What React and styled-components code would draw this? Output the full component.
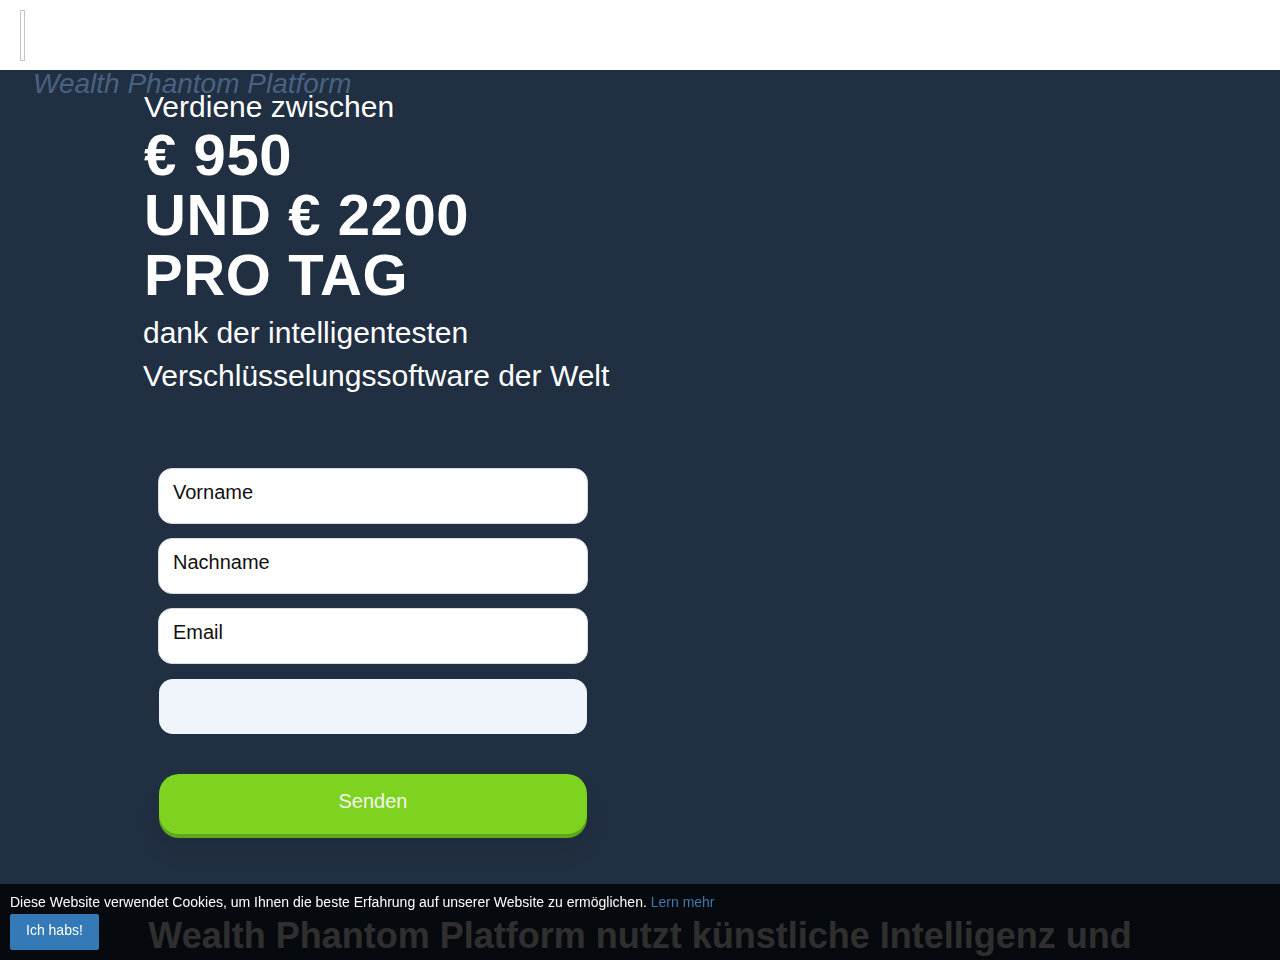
import styled, { createGlobalStyle } from 'styled-components';

const GlobalStyle = createGlobalStyle`
	html, body {
		margin: 0;
		padding: 0;
		background: #212f42;
		font-family: 'Liberation Sans', Arial, sans-serif;
	}
	* {
		box-sizing: border-box;
	}
`;

const Header = styled.header`
	height: 70px;
	background: #ffffff;
	padding: 10px 0 0 20px;
`;

const BrokenLogo = styled.span`
	display: block;
	width: 5px;
	height: 51px;
	border: 1px solid #c4c4c4;
`;

const Hero = styled.section`
	background: #212f42;
	padding-bottom: 40px;
`;

const Brand = styled.div`
	padding-left: 33px;
	font-size: 28px;
	line-height: 28px;
	font-style: italic;
	color: #4a6282;
	margin-bottom: -6px;
	white-space: nowrap;
`;

const Content = styled.div`
	padding-left: 144px;
	color: #ffffff;
`;

const Lead = styled.div`
	font-size: 30px;
	line-height: 30px;
`;

const Amount = styled.h1`
	margin: 3px 0 0;
	font-size: 58px;
	line-height: 60px;
	font-weight: 700;
	letter-spacing: 0.6px;
`;

const Sub = styled.p`
	margin: 6px 0 0 -1px;
	font-size: 30px;
	line-height: 43px;
`;

const Form = styled.form`
	width: 430px;
	margin: 71px 0 0 14px;
	display: flex;
	flex-direction: column;
	gap: 14px;
`;

const Input = styled.input`
	width: 430px;
	height: 56px;
	padding: 0 14px 7px;
	border: 1px solid #d6dce4;
	border-radius: 14px;
	background: #ffffff;
	font-family: inherit;
	font-size: 20px;
	color: #111;
	outline: none;

	&::placeholder {
		color: #111;
		opacity: 1;
	}
`;

const PhoneField = styled.div`
	width: 428px;
	height: 55px;
	margin: 1px 0 0 1px;
	border-radius: 14px;
	background: #f0f5fc;
`;

const Submit = styled.button`
	width: 428px;
	height: 60px;
	margin: 26px 0 0 1px;
	padding: 0 0 6px;
	border: none;
	border-radius: 20px;
	background: #7ed321;
	box-shadow: 0 4px 0 #5fa61b, 0 18px 24px rgba(0, 0, 0, 0.06);
	font-family: inherit;
	font-size: 20px;
	color: #f4f6f2;
	cursor: pointer;
`;

const Features = styled.section`
	background: #212f42;
	padding: 40px 0 60px;
`;

const FeatureTitle = styled.h2`
	max-width: 1000px;
	margin: 0 auto;
	text-align: center;
	font-size: 36px;
	line-height: 43px;
	font-weight: 700;
	color: #e8e8e8;
`;

const CookieBar = styled.div`
	position: fixed;
	left: 0;
	right: 0;
	bottom: 0;
	height: 76px;
	padding: 8px 10px 10px;
	background: rgba(0, 0, 0, 0.8);
	color: #ffffff;
	font-size: 14px;
	line-height: 20px;
`;

const CookieLink = styled.a`
	color: #4277aa;
	text-decoration: none;
`;

const CookieButton = styled.button`
	display: block;
	height: 36px;
	margin-top: 2px;
	padding: 0 16px 4px;
	border: none;
	border-radius: 2px;
	background: #337ab7;
	color: #ffffff;
	font-family: inherit;
	font-size: 14px;
`;

export default function App() {
	return (
		<>
			<GlobalStyle />
			<Header>
				<BrokenLogo />
			</Header>
			<Hero>
				<Brand>Wealth Phantom Platform</Brand>
				<Content>
					<Lead>Verdiene zwischen</Lead>
					<Amount>
						€ 950
						<br />
						UND € 2200
						<br />
						PRO TAG
					</Amount>
					<Sub>
						dank der intelligentesten
						<br />
						Verschlüsselungssoftware der Welt
					</Sub>
					<Form onSubmit={(e) => e.preventDefault()}>
						<Input placeholder='Vorname' />
						<Input placeholder='Nachname' />
						<Input placeholder='Email' />
						<PhoneField />
						<Submit type='submit'>Senden</Submit>
					</Form>
				</Content>
			</Hero>
			<Features>
				<FeatureTitle>
					Wealth Phantom Platform nutzt künstliche Intelligenz und maschinelles Lernen
				</FeatureTitle>
			</Features>
			<CookieBar>
				Diese Website verwendet Cookies, um Ihnen die beste Erfahrung auf unserer Website zu
				ermöglichen. <CookieLink href='#'>Lern mehr</CookieLink>
				<CookieButton>Ich habs!</CookieButton>
			</CookieBar>
		</>
	);
}
